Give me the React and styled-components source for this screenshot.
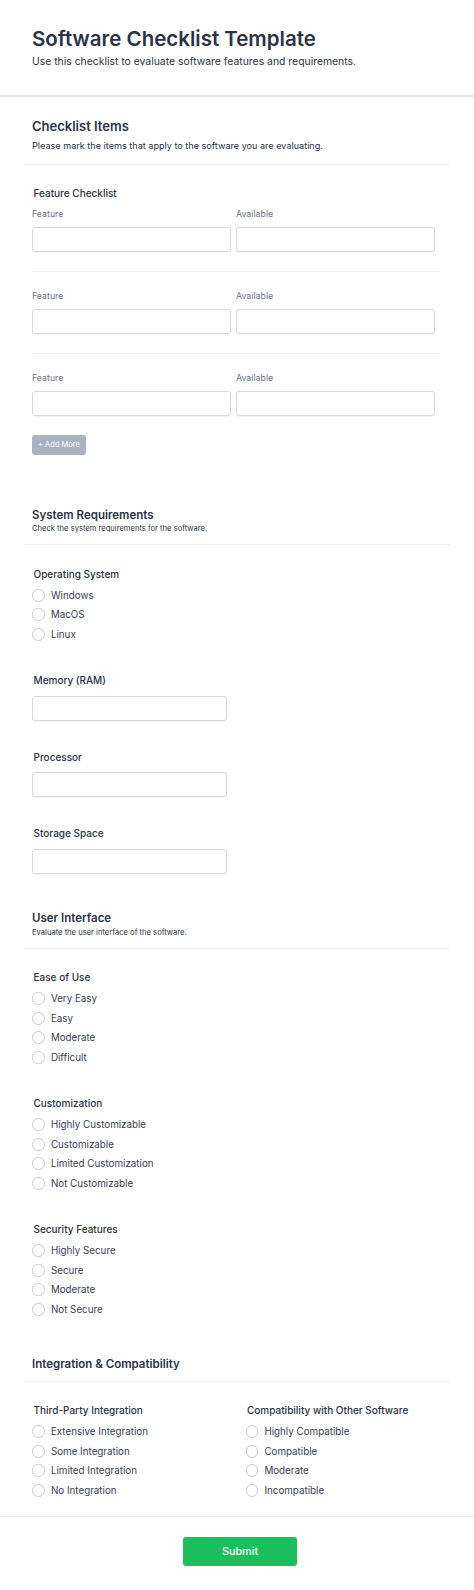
import styled, { createGlobalStyle } from 'styled-components';

const GlobalStyle = createGlobalStyle`
  body {
    margin: 0;
    background: #ffffff;
    font-family: Inter, "Noto Sans", Roboto, sans-serif;
    color: #2c3345;
  }
  * {
    box-sizing: border-box;
  }
`;

const Page = styled.div`
  width: 474px;
  min-height: 1590px;
  background: #ffffff;
`;

const Header = styled.header`
  padding: 27px 32px 26px;
  border-bottom: 2px solid #e7e9ee;
`;

const Title = styled.h1`
  margin: 0;
  font-size: 20.5px;
  line-height: 24px;
  font-weight: 600;
  color: #2c3345;
`;

const Subtitle = styled.p`
  margin: 4px 0 0;
  font-size: 10.4px;
  line-height: 14px;
  color: #2c3345;
`;

const Section = styled.section`
  padding-top: 21px;
`;

const SectionHead = styled.div`
  margin: 0 24px;
  padding: 0 8px ${props => (props.$pad ? props.$pad : 10)}px;
  border-bottom: 1px solid #eef0f3;
`;

const SectionTitle = styled.h2`
  margin: 0;
  font-size: ${props => (props.$large ? '13px' : '11.5px')};
  line-height: 16px;
  font-weight: 600;
  color: #2c3345;
`;

const SectionDesc = styled.p`
  margin: ${props => (props.$small ? '1.5px' : '6px')} 0 0;
  font-size: ${props => (props.$small ? '7.6px' : '9.1px')};
  line-height: ${props => (props.$small ? '10px' : '12px')};
  color: #2c3345;
`;

const Body = styled.div`
  padding: 22.5px 32px 15.5px;
  display: flex;
  flex-direction: column;
  gap: 30px;
`;

const Field = styled.div`
  display: flex;
  flex-direction: column;
`;

const FieldLabel = styled.label`
  padding-left: 1.5px;
  font-size: 10px;
  line-height: 13px;
  font-weight: 500;
  color: #2c3345;
`;

const Sublabel = styled.span`
  display: block;
  font-size: 8.8px;
  line-height: 12px;
  color: #6f7689;
`;

const TextInput = styled.input`
  display: block;
  width: ${props => props.$width || 199}px;
  height: 25px;
  margin-top: ${props => (props.$top ? props.$top : 7)}px;
  padding: 0 6px;
  border: 1px solid #d6d9df;
  border-radius: 3px;
  background: #ffffff;
  box-shadow: 0 1px 1px rgba(0, 0, 0, 0.04);
  font: inherit;
  outline: none;
`;

const FeatureList = styled.div`
  margin-top: 8px;
  display: flex;
  flex-direction: column;
`;

const FeatureRow = styled.div`
  display: grid;
  grid-template-columns: 199px 199px;
  column-gap: 5px;
`;

const RowDivider = styled.hr`
  width: 408px;
  margin: 19px 0 18px;
  border: 0;
  border-top: 1px solid #eef0f3;
`;

const AddButton = styled.button`
  align-self: flex-start;
  margin: 19px 0 15.5px;
  width: 54px;
  height: 19.5px;
  padding: 0;
  border: 0;
  border-radius: 3px;
  background: #aab1bf;
  color: #ffffff;
  font-family: inherit;
  font-size: 7.5px;
  line-height: 19.5px;
`;

const RadioList = styled.div`
  margin-top: 5px;
  display: flex;
  flex-direction: column;
`;

const RadioItem = styled.label`
  display: flex;
  align-items: center;
  height: 19.5px;
  gap: 6.3px;
  font-size: 9.8px;
  color: #3a4154;
`;

const RadioCircle = styled.span`
  width: 12.6px;
  height: 12.6px;
  flex-shrink: 0;
  border: 1px solid #c7cbd3;
  border-radius: 50%;
  background: #ffffff;
`;

const Columns = styled.div`
  display: grid;
  grid-template-columns: 213.5px 1fr;
`;

const Footer = styled.footer`
  border-top: 1px solid #e7e9ee;
  padding: 20px 26px 25px 32px;
  display: flex;
  justify-content: center;
`;

const SubmitButton = styled.button`
  width: 114px;
  height: 29px;
  border: 0;
  border-radius: 3px;
  background: #1bbd5c;
  color: #ffffff;
  font-family: inherit;
  font-size: 10.8px;
  font-weight: 500;
`;

const RadioField = ({ label, options }) => (
  <Field>
    <FieldLabel>{label}</FieldLabel>
    <RadioList>
      {options.map(option => (
        <RadioItem key={option}>
          <RadioCircle />
          {option}
        </RadioItem>
      ))}
    </RadioList>
  </Field>
);

const InputField = ({ label }) => (
  <Field>
    <FieldLabel>{label}</FieldLabel>
    <TextInput $width={195} $top={8.5} />
  </Field>
);

const FeatureInputs = () => (
  <FeatureRow>
    <div>
      <Sublabel>Feature</Sublabel>
      <TextInput />
    </div>
    <div>
      <Sublabel>Available</Sublabel>
      <TextInput />
    </div>
  </FeatureRow>
);

const App = () => (
  <Page>
    <GlobalStyle />
    <Header>
      <Title>Software Checklist Template</Title>
      <Subtitle>
        Use this checklist to evaluate software features and requirements.
      </Subtitle>
    </Header>

    <Section>
      <SectionHead $pad={11.5}>
        <SectionTitle $large>Checklist Items</SectionTitle>
        <SectionDesc>
          Please mark the items that apply to the software you are evaluating.
        </SectionDesc>
      </SectionHead>
      <Body>
        <Field>
          <FieldLabel>Feature Checklist</FieldLabel>
          <FeatureList>
            <FeatureInputs />
            <RowDivider />
            <FeatureInputs />
            <RowDivider />
            <FeatureInputs />
            <AddButton>+ Add More</AddButton>
          </FeatureList>
        </Field>
      </Body>
    </Section>

    <Section>
      <SectionHead>
        <SectionTitle>System Requirements</SectionTitle>
        <SectionDesc $small>Check the system requirements for the software.</SectionDesc>
      </SectionHead>
      <Body>
        <RadioField label="Operating System" options={['Windows', 'MacOS', 'Linux']} />
        <InputField label="Memory (RAM)" />
        <InputField label="Processor" />
        <InputField label="Storage Space" />
      </Body>
    </Section>

    <Section>
      <SectionHead>
        <SectionTitle>User Interface</SectionTitle>
        <SectionDesc $small>Evaluate the user interface of the software.</SectionDesc>
      </SectionHead>
      <Body>
        <RadioField
          label="Ease of Use"
          options={['Very Easy', 'Easy', 'Moderate', 'Difficult']}
        />
        <RadioField
          label="Customization"
          options={[
            'Highly Customizable',
            'Customizable',
            'Limited Customization',
            'Not Customizable',
          ]}
        />
        <RadioField
          label="Security Features"
          options={['Highly Secure', 'Secure', 'Moderate', 'Not Secure']}
        />
      </Body>
    </Section>

    <Section>
      <SectionHead $pad={9}>
        <SectionTitle>Integration &amp; Compatibility</SectionTitle>
      </SectionHead>
      <Body>
        <Columns>
          <RadioField
            label="Third-Party Integration"
            options={[
              'Extensive Integration',
              'Some Integration',
              'Limited Integration',
              'No Integration',
            ]}
          />
          <RadioField
            label="Compatibility with Other Software"
            options={['Highly Compatible', 'Compatible', 'Moderate', 'Incompatible']}
          />
        </Columns>
      </Body>
    </Section>

    <Footer>
      <SubmitButton>Submit</SubmitButton>
    </Footer>
  </Page>
);

export default App;
